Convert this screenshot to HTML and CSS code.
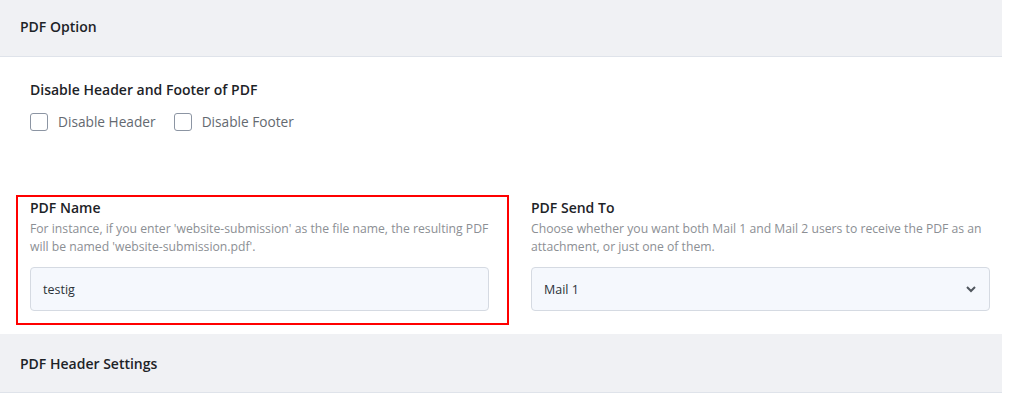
FILE: index.html
```html
<!DOCTYPE html>
<html lang="en">
<head>
  <meta charset="UTF-8" />
  <meta name="viewport" content="width=device-width, initial-scale=1.0"/>
  <title>PDF Option</title>
  <link rel="stylesheet" href="styles.css">
</head>
<body>
  <div class="panel">
    <div class="panel-head">PDF Option</div>

    <div class="panel-body">
      <div class="group">
        <h4>Disable Header and Footer of PDF</h4>
        <div class="checks">
          <label class="check"><span class="box"></span>Disable Header</label>
          <label class="check"><span class="box"></span>Disable Footer</label>
        </div>
      </div>

      <div class="row">
        <div class="field highlighted">
          <h4>PDF Name</h4>
          <p class="hint">For instance, if you enter 'website-submission' as the file name, the resulting PDF will be named 'website-submission.pdf'.</p>
          <div class="input">testig</div>
        </div>
        <div class="field">
          <h4>PDF Send To</h4>
          <p class="hint">Choose whether you want both Mail 1 and Mail 2 users to receive the PDF as an attachment, or just one of them.</p>
          <div class="input select">
            Mail 1
            <svg width="12" height="8" viewBox="0 0 12 8"><path d="M2 2l4 4 4-4" fill="none" stroke="#50575e" stroke-width="2"/></svg>
          </div>
        </div>
      </div>
    </div>

    <div class="panel-head tall">PDF Header Settings</div>
  </div>
</body>
</html>
```

FILE: styles.css
```css
* {
  box-sizing: border-box;
}

body {
  margin: 0;
  background: #fff;
  font-family: 'Open Sans', sans-serif;
  color: #1d2327;
}

.panel {
  width: 1002px;
}

.panel-head {
  height: 57px;
  padding: 0 20px 3px;
  display: flex;
  align-items: center;
  background: #f0f1f4;
  border-bottom: 1px solid #dfe3ea;
  font-size: 14px;
  font-weight: 600;
}

.panel-head.tall {
  height: 59px;
  padding-bottom: 0;
}

.panel-body {
  padding: 23px 12px 23px 30px;
}

h4 {
  margin: 0;
  font-size: 14px;
  font-weight: 600;
  line-height: 20px;
}

.checks {
  display: flex;
  gap: 18px;
  margin-top: 12px;
}

.check {
  display: flex;
  align-items: center;
  gap: 10px;
  font-size: 13.7px;
  color: #646970;
}

.box {
  width: 18px;
  height: 18px;
  border: 1px solid #8c95a3;
  border-radius: 3px;
  background: #fff;
}

.row {
  display: grid;
  grid-template-columns: 459px 459px;
  gap: 42px;
  margin-top: 67px;
}

.field {
  position: relative;
}

.highlighted::after {
  content: "";
  position: absolute;
  top: -3px;
  left: -14px;
  right: -20px;
  bottom: -14px;
  border: 2px solid #f00;
}

.hint {
  margin: 2px 0 0;
  font-size: 12.2px;
  line-height: 18px;
  color: #8c8f94;
}

.input {
  height: 44px;
  margin-top: 11px;
  padding: 0 12px;
  display: flex;
  align-items: center;
  background: #f5f8fd;
  border: 1px solid #d5dae2;
  border-radius: 4px;
  font-size: 12.5px;
  color: #2c3338;
}

.select {
  justify-content: space-between;
}
```
